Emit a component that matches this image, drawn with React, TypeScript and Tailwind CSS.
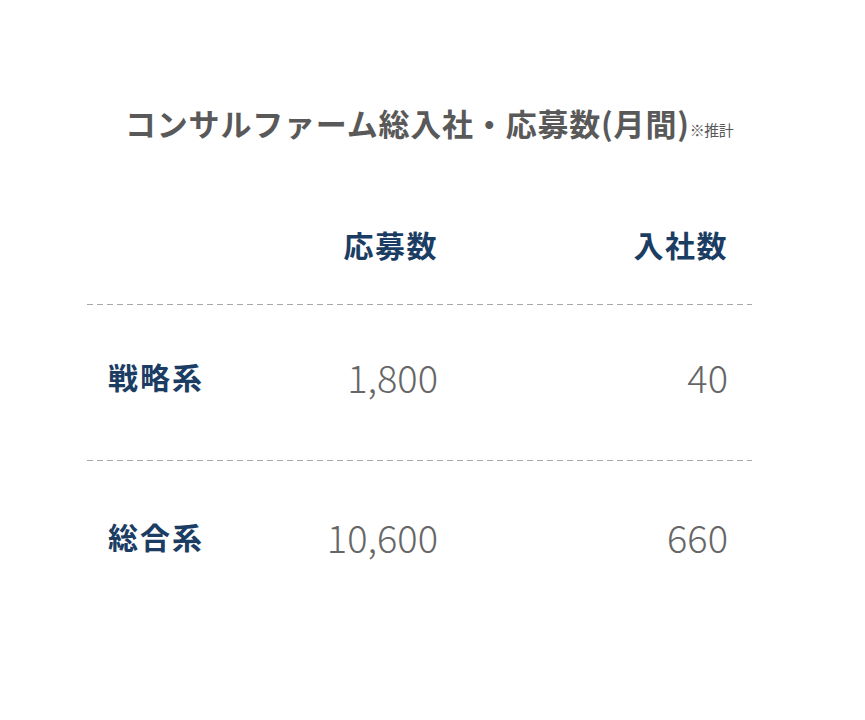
const rows = [
  { label: "戦略系", apply: "1,800", join: "40", pad: "pb-[12px]" },
  { label: "総合系", apply: "10,600", join: "660", pad: "pb-[4px]" },
];

function Dashed() {
  return (
    <div className="h-px w-full bg-[linear-gradient(to_right,#a8a8a8_6px,transparent_6px)] bg-[length:10px_1px] bg-repeat-x" />
  );
}

export default function App() {
  return (
    <div className="min-h-[720px] w-[865px] bg-white font-['Noto_Sans_CJK_JP','Noto_Sans',sans-serif]">
      <div className="flex items-end pl-[125px] pt-[104px]">
        <h1 className="text-[31px] font-bold leading-[38px] tracking-[0.8px] text-[#595959]">
          コンサルファーム総入社・応募数(月間)
        </h1>
        <span className="mb-[5px] text-[15px] leading-none tracking-[-0.5px] text-[#595959]">※推計</span>
      </div>

      <div className="ml-[87px] mt-[82px] w-[665px]">
        <div className="flex pb-[40px] pl-[21px] text-[30px] font-bold leading-[40px] tracking-[1.5px] text-[#1b3d63]">
          <div className="w-[150px]" />
          <div className="w-[180px] text-right">応募数</div>
          <div className="w-[290px] text-right">入社数</div>
        </div>
        <Dashed />
        {rows.map((row, i) => (
          <div key={row.label}>
            <div className={`flex h-[155px] items-center pl-[21px] ${row.pad}`}>
              <div className="w-[150px] text-[30px] font-bold tracking-[2px] text-[#1b3d63]">{row.label}</div>
              <div className="w-[180px] text-right text-[38px] font-light text-[#666]">{row.apply}</div>
              <div className="w-[290px] text-right text-[38px] font-light text-[#666]">{row.join}</div>
            </div>
            {i === 0 ? <Dashed /> : null}
          </div>
        ))}
      </div>
    </div>
  );
}
